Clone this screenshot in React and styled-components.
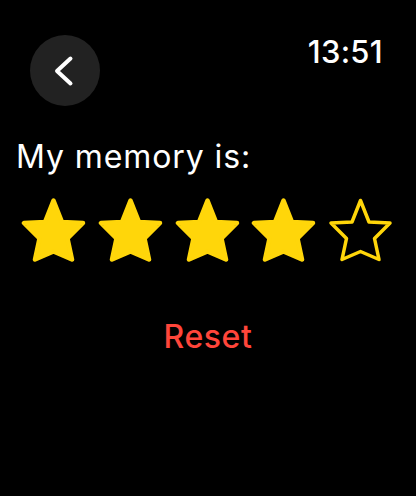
import React from 'react';
import styled, { createGlobalStyle } from 'styled-components';

const GlobalStyle = createGlobalStyle`
  html, body {
    margin: 0;
    padding: 0;
    background: #000;
  }
  body {
    font-family: Inter, "Noto Sans", sans-serif;
    color: #fff;
  }
`;

const Screen = styled.div`
  width: 416px;
  height: 496px;
  background: #000;
  display: flex;
  flex-direction: column;
  overflow: hidden;
`;

const TopBar = styled.div`
  display: flex;
  justify-content: space-between;
  align-items: flex-start;
  padding: 35px 33px 0 30px;
`;

const BackButton = styled.button`
  width: 70px;
  height: 71px;
  border-radius: 50%;
  border: none;
  padding: 0;
  background: #222222;
  display: flex;
  align-items: center;
  justify-content: center;
`;

const Clock = styled.div`
  font-size: 31px;
  font-weight: 500;
  line-height: 1;
  margin-top: 1px;
  letter-spacing: 0.3px;
`;

const Title = styled.div`
  font-size: 32px;
  font-weight: 400;
  line-height: 1;
  letter-spacing: 0.9px;
  margin: 35px 0 0 16px;
`;

const StarRow = styled.div`
  display: flex;
  gap: 11.75px;
  padding-left: 21px;
  margin-top: 24px;
`;

const Reset = styled.button`
  align-self: center;
  background: none;
  border: none;
  padding: 0;
  margin-top: 58px;
  font-family: inherit;
  font-size: 32px;
  font-weight: 500;
  line-height: 1;
  letter-spacing: 0.6px;
  color: #ff453a;
`;

// rounded five-point star, a bit fatter than a regular one
const STAR =
  'M32.5 3.5 L41 25 L62 26 L46.5 41.5 L51 62.5 L32.5 54.5 L14 62.5 L18.5 41.5 L3 26 L24 25 Z';

const Star = ({ filled }) => (
  <svg width="65" height="66" viewBox="0 0 65 66">
    <path
      d={STAR}
      fill={filled ? '#ffd60a' : 'none'}
      stroke="#ffd60a"
      strokeWidth={filled ? 4.5 : 3.5}
      strokeLinejoin="round"
    />
  </svg>
);

const rating = 4;

export default function App() {
  return (
    <Screen>
      <GlobalStyle />
      <TopBar>
        <BackButton aria-label="Back">
          <svg width="24" height="32" viewBox="0 0 24 32">
            <path
              d="M17.5 3.5 L4 16 L17.5 28.5"
              fill="none"
              stroke="#fff"
              strokeWidth="4"
              strokeLinecap="round"
              strokeLinejoin="round"
            />
          </svg>
        </BackButton>
        <Clock>13:51</Clock>
      </TopBar>
      <Title>My memory is:</Title>
      <StarRow>
        {[1, 2, 3, 4, 5].map((n) => (
          <Star key={n} filled={n <= rating} />
        ))}
      </StarRow>
      <Reset>Reset</Reset>
    </Screen>
  );
}
